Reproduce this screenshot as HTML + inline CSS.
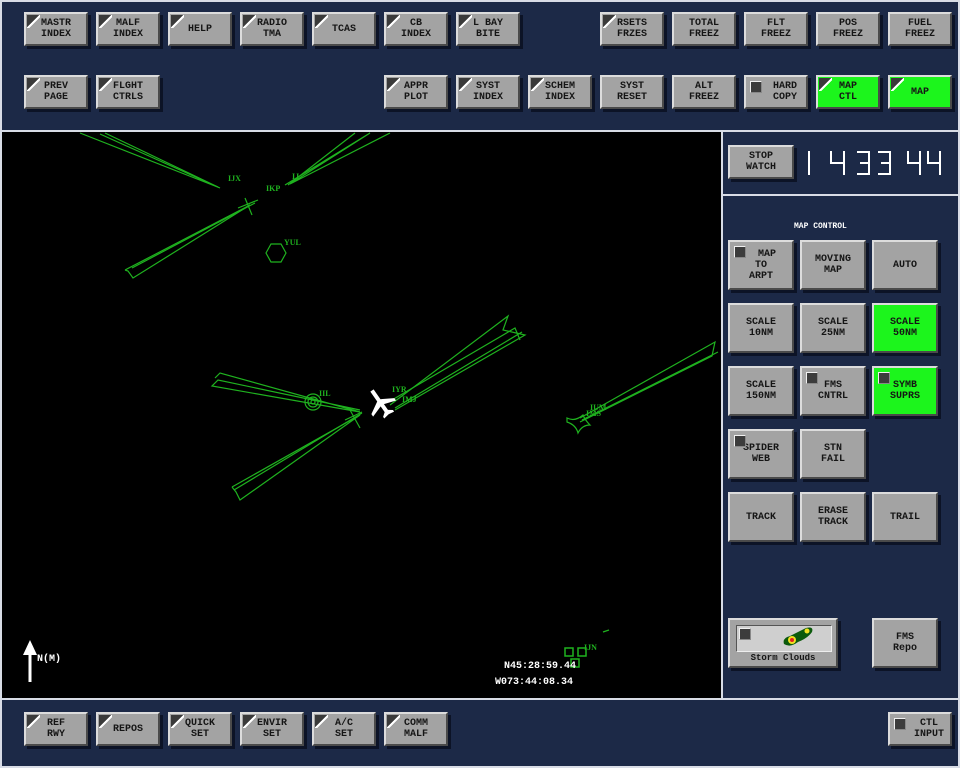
<!DOCTYPE html>
<html><head><meta charset="utf-8"><style>
*{margin:0;padding:0;box-sizing:border-box}
body{width:960px;height:768px;background:#1c2947;position:relative;overflow:hidden;font-family:"Liberation Serif",serif}
.ln{position:absolute;background:#d8dce6}
.b{position:absolute;width:64px;height:34px;background:#a3a3a3;border:2px solid;border-color:#dcdcdc #4a4a4a #4a4a4a #dcdcdc;box-shadow:3px 3px 0 #0c1326;font:bold 10px/11px "Liberation Mono",monospace;color:#151515;text-align:center;display:flex;align-items:center;justify-content:center;letter-spacing:0px}
.b.g{background:#1cf51c}
.b.t::before{content:"";position:absolute;left:1px;top:1px;width:13px;height:13px;background:linear-gradient(135deg,#3a3a3a 0,#3a3a3a 48%,#fff 48%,#fff 58%,transparent 58%)}
.b .sq{position:absolute;left:4px;top:4px;width:12px;height:12px;background:#3c3c3c;border:1px solid;border-color:#f0f0f0 #888 #888 #f0f0f0}
.r{width:66px;height:50px}
</style></head><body>
<div class="ln" style="left:0;top:0;width:960px;height:2px"></div>
<div class="ln" style="left:0;top:0;width:2px;height:768px"></div>
<div class="ln" style="left:958px;top:0;width:2px;height:768px"></div>
<div class="ln" style="left:0;top:130px;width:960px;height:2px"></div>
<div class="ln" style="left:0;top:698px;width:960px;height:2px"></div>
<div class="ln" style="left:0;top:766px;width:960px;height:2px"></div>
<div class="ln" style="left:721px;top:130px;width:2px;height:570px"></div>
<div class="ln" style="left:721px;top:194px;width:239px;height:2px"></div>

<div class="b t" style="left:24px;top:12px">MASTR<br>INDEX</div>
<div class="b t" style="left:96px;top:12px">MALF<br>INDEX</div>
<div class="b t" style="left:168px;top:12px">HELP</div>
<div class="b t" style="left:240px;top:12px">RADIO<br>TMA</div>
<div class="b t" style="left:312px;top:12px">TCAS</div>
<div class="b t" style="left:384px;top:12px">CB<br>INDEX</div>
<div class="b t" style="left:456px;top:12px">L BAY<br>BITE</div>
<div class="b t" style="left:600px;top:12px">RSETS<br>FRZES</div>
<div class="b" style="left:672px;top:12px">TOTAL<br>FREEZ</div>
<div class="b" style="left:744px;top:12px">FLT<br>FREEZ</div>
<div class="b" style="left:816px;top:12px">POS<br>FREEZ</div>
<div class="b" style="left:888px;top:12px">FUEL<br>FREEZ</div>
<div class="b t" style="left:24px;top:75px">PREV<br>PAGE</div>
<div class="b t" style="left:96px;top:75px">FLGHT<br>CTRLS</div>
<div class="b t" style="left:384px;top:75px">APPR<br>PLOT</div>
<div class="b t" style="left:456px;top:75px">SYST<br>INDEX</div>
<div class="b t" style="left:528px;top:75px">SCHEM<br>INDEX</div>
<div class="b" style="left:600px;top:75px">SYST<br>RESET</div>
<div class="b" style="left:672px;top:75px">ALT<br>FREEZ</div>
<div class="b" style="left:744px;top:75px"><span class="sq"></span>&nbsp;&nbsp;&nbsp;HARD<br>&nbsp;&nbsp;&nbsp;COPY</div>
<div class="b t g" style="left:816px;top:75px">MAP<br>CTL</div>
<div class="b t g" style="left:888px;top:75px">MAP</div>

<div style="position:absolute;left:2px;top:132px;width:719px;height:566px;background:#000"></div>
<svg style="position:absolute;left:0;top:0" width="960" height="768" viewBox="0 0 960 768">
<g fill="none" stroke="#1fb21f" stroke-width="1.2">
<polyline points="80,133 220,188 100,134"/>
<polyline points="105,133 218,187"/>
<polyline points="125,270 250,205 133,278 128,271 125,270"/>
<polyline points="132,268 255,203"/>
<path d="M245,198 L252,215 M238,208 L258,200"/>
<polyline points="285,185 370,133 290,184 390,133"/>
<polyline points="288,185 355,133"/>
<polygon points="266,253 271,244 281,244 286,253 281,262 271,262"/>
<polyline points="215,378 220,373 360,412 212,386 218,380 360,410"/>
<circle cx="313" cy="402" r="8"/><circle cx="313" cy="402" r="5"/><circle cx="313" cy="402" r="2"/>
<polyline points="232,487 360,415 240,500 236,492 232,487"/>
<polyline points="234,490 362,413"/>
<path d="M350,410 L360,428 M345,420 L362,412"/>
<polyline points="390,405 508,316 503,330 525,335 395,410"/>
<polyline points="392,400 515,328 520,340"/>
<polyline points="395,408 522,332"/>
<polyline points="580,418 715,342 712,356 580,422"/>
<polyline points="582,420 718,352"/>
<path d="M567,418 Q575,422 583,415 Q585,420 590,425 Q582,425 578,433 Q576,425 567,422 Z"/>
<path d="M565,648 h8 v8 h-8 z M578,648 h8 v8 h-8 z M571,659 h8 v8 h-8 z" stroke-width="1.5"/>
<path d="M603,632 L609,630"/>
</g>
<g fill="#1fb21f" font-family="Liberation Serif" font-size="8" font-weight="bold">
<text x="228" y="181">IJX</text><text x="266" y="191">IKP</text><text x="292" y="179">IJ</text>
<text x="284" y="245">YUL</text><text x="319" y="396">IIL</text><text x="392" y="392">IYR</text><text x="402" y="402">IMJ</text>
<text x="590" y="410">IUM</text><text x="586" y="416">IMS</text><text x="584" y="650">IJN</text>
</g>
<g fill="#fff" transform="translate(380,402) rotate(-35)">
<path d="M-2,-14 L2,-14 L2,-2 L14,5 L14,8 L2,4 L2,11 L6,14 L6,16 L0,15 L-6,16 L-6,14 L-2,11 L-2,4 L-14,8 L-14,5 L-2,-2 Z"/>
</g>
<path d="M30,682 V650" stroke="#fff" stroke-width="3"/>
<path d="M23,655 L30,640 L37,655 Z" fill="#fff"/>
<g fill="#fff" font-family="Liberation Mono" font-size="10" font-weight="bold">
<text x="37" y="661">N(M)</text>
<text x="504" y="668">N45:28:59.44</text>
<text x="495" y="684">W073:44:08.34</text>
<text x="794" y="228" font-size="8">MAP CONTROL</text>
</g>
<g fill="#fff">
<rect x="808" y="151" width="2" height="24"/>
<rect x="830" y="151" width="2" height="13"/><rect x="830" y="162" width="15" height="2"/><rect x="843" y="151" width="2" height="24"/>
<rect x="857" y="151" width="13" height="2"/><rect x="860" y="162" width="10" height="2"/><rect x="857" y="173" width="13" height="2"/><rect x="868" y="151" width="2" height="24"/>
<rect x="878" y="151" width="13" height="2"/><rect x="881" y="162" width="10" height="2"/><rect x="878" y="173" width="13" height="2"/><rect x="889" y="151" width="2" height="24"/>
<rect x="907" y="151" width="2" height="13"/><rect x="907" y="162" width="14" height="2"/><rect x="919" y="151" width="2" height="24"/>
<rect x="927" y="151" width="2" height="13"/><rect x="927" y="162" width="14" height="2"/><rect x="939" y="151" width="2" height="24"/>
</g>
</svg>

<div class="b" style="left:728px;top:145px;width:66px;height:34px">STOP<br>WATCH</div>
<div class="b r" style="left:728px;top:240px"><span class="sq"></span>&nbsp;&nbsp;MAP<br>TO<br>ARPT</div>
<div class="b r" style="left:800px;top:240px">MOVING<br>MAP</div>
<div class="b r" style="left:872px;top:240px">AUTO</div>
<div class="b r" style="left:728px;top:303px">SCALE<br>10NM</div>
<div class="b r" style="left:800px;top:303px">SCALE<br>25NM</div>
<div class="b r g" style="left:872px;top:303px">SCALE<br>50NM</div>
<div class="b r" style="left:728px;top:366px">SCALE<br>150NM</div>
<div class="b r" style="left:800px;top:366px"><span class="sq"></span>FMS<br>CNTRL</div>
<div class="b r g" style="left:872px;top:366px"><span class="sq"></span>SYMB<br>SUPRS</div>
<div class="b r" style="left:728px;top:429px"><span class="sq"></span>SPIDER<br>WEB</div>
<div class="b r" style="left:800px;top:429px">STN<br>FAIL</div>
<div class="b r" style="left:728px;top:492px">TRACK</div>
<div class="b r" style="left:800px;top:492px">ERASE<br>TRACK</div>
<div class="b r" style="left:872px;top:492px">TRAIL</div>
<div class="b" style="left:728px;top:618px;width:110px;height:50px;display:block">
  <div style="position:absolute;left:6px;top:5px;width:96px;height:27px;background:#cfcfcf;border:1px solid;border-color:#555 #eee #eee #555"></div>
  <span class="sq" style="left:9px;top:8px"></span>
  <svg style="position:absolute;left:50px;top:6px" width="36" height="24"><path d="M4,18 Q2,12 10,10 Q18,6 26,2 Q34,0 32,6 Q28,12 18,16 Q10,22 4,18 Z" fill="#0c5a0c"/><circle cx="12" cy="14" r="4" fill="#f0e020"/><circle cx="12" cy="14" r="2" fill="#e02020"/><circle cx="27" cy="5" r="2.5" fill="#f0e020"/></svg>
  <div style="position:absolute;left:0;top:33px;width:106px;text-align:center;font-size:9px">Storm Clouds</div>
</div>
<div class="b r" style="left:872px;top:618px">FMS<br>Repo</div>

<div class="b t" style="left:24px;top:712px">REF<br>RWY</div>
<div class="b t" style="left:96px;top:712px">REPOS</div>
<div class="b t" style="left:168px;top:712px">QUICK<br>SET</div>
<div class="b t" style="left:240px;top:712px">ENVIR<br>SET</div>
<div class="b t" style="left:312px;top:712px">A/C<br>SET</div>
<div class="b t" style="left:384px;top:712px">COMM<br>MALF</div>
<div class="b" style="left:888px;top:712px"><span class="sq"></span>&nbsp;&nbsp;&nbsp;CTL<br>&nbsp;&nbsp;&nbsp;INPUT</div>
</body></html>
